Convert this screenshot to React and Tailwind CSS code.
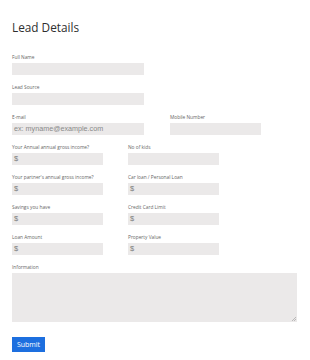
import React from "react";

const inputCls =
  "block h-[12px] bg-[#ebe9e9] border-0 outline-none px-[2px]";

function Field({ label, width, placeholder, value }) {
  return (
    <div className="flex flex-col" style={{ width }}>
      <div className="text-[4.8px] leading-[6px] mb-[3px] text-[#666] whitespace-nowrap">{label}</div>
      <div className={inputCls + " flex items-center"} style={{ width }}>
        {placeholder ? (
          <span className="text-[7.2px] text-[#888] font-['Liberation_Sans',Arial,sans-serif] leading-none">{placeholder}</span>
        ) : value ? (
          <span className="text-[7.5px] text-[#7a7a7a] font-['Liberation_Sans',Arial,sans-serif] leading-none">{value}</span>
        ) : null}
      </div>
    </div>
  );
}

export default function App() {
  return (
    <div className="w-[310px] h-[360px] bg-white font-['Open_Sans',sans-serif] px-[12px] pt-[19px]">
      <h1 className="text-[11.8px] leading-[16px] font-medium text-[#2e2e2e] mb-[19px]">Lead Details</h1>
      <div className="flex flex-col gap-[9px]">
        <Field label="Full Name" width={132} />
        <Field label="Lead Source" width={132} />
        <div className="flex gap-[26px]">
          <Field label="E-mail" width={132} placeholder="ex: myname@example.com" />
          <Field label="Mobile Number" width={91} />
        </div>
        <div className="flex gap-[25px]">
          <Field label="Your Annual annual gross income?" width={91} value="$" />
          <Field label="No of kids" width={91} />
        </div>
        <div className="flex gap-[25px]">
          <Field label="Your partner's annual gross income?" width={91} value="$" />
          <Field label="Car loan / Personal Loan" width={91} value="$" />
        </div>
        <div className="flex gap-[25px]">
          <Field label="Savings you have" width={91} value="$" />
          <Field label="Credit Card Limit" width={91} value="$" />
        </div>
        <div className="flex gap-[25px]">
          <Field label="Loan Amount" width={91} value="$" />
          <Field label="Property Value" width={91} value="$" />
        </div>
        <div className="flex flex-col">
          <div className="text-[4.8px] leading-[6px] mb-[3px] text-[#666]">Information</div>
          <div className="relative w-[285px]">
            <textarea className="block w-[285px] h-[49px] bg-[#ebe9e9] border-0 outline-none resize-none" />
            <svg className="absolute right-[1px] bottom-[1px]" width="4" height="4" viewBox="0 0 4 4">
              <path d="M4 0 L0 4 M4 2 L2 4" stroke="#999" strokeWidth="0.6" />
            </svg>
          </div>
        </div>
      </div>
      <button className="mt-[15px] w-[33px] h-[15px] bg-[#1d6fdf] text-white text-[7px] leading-[15px] font-['Open_Sans',sans-serif] flex items-center justify-center">
        Submit
      </button>
    </div>
  );
}
